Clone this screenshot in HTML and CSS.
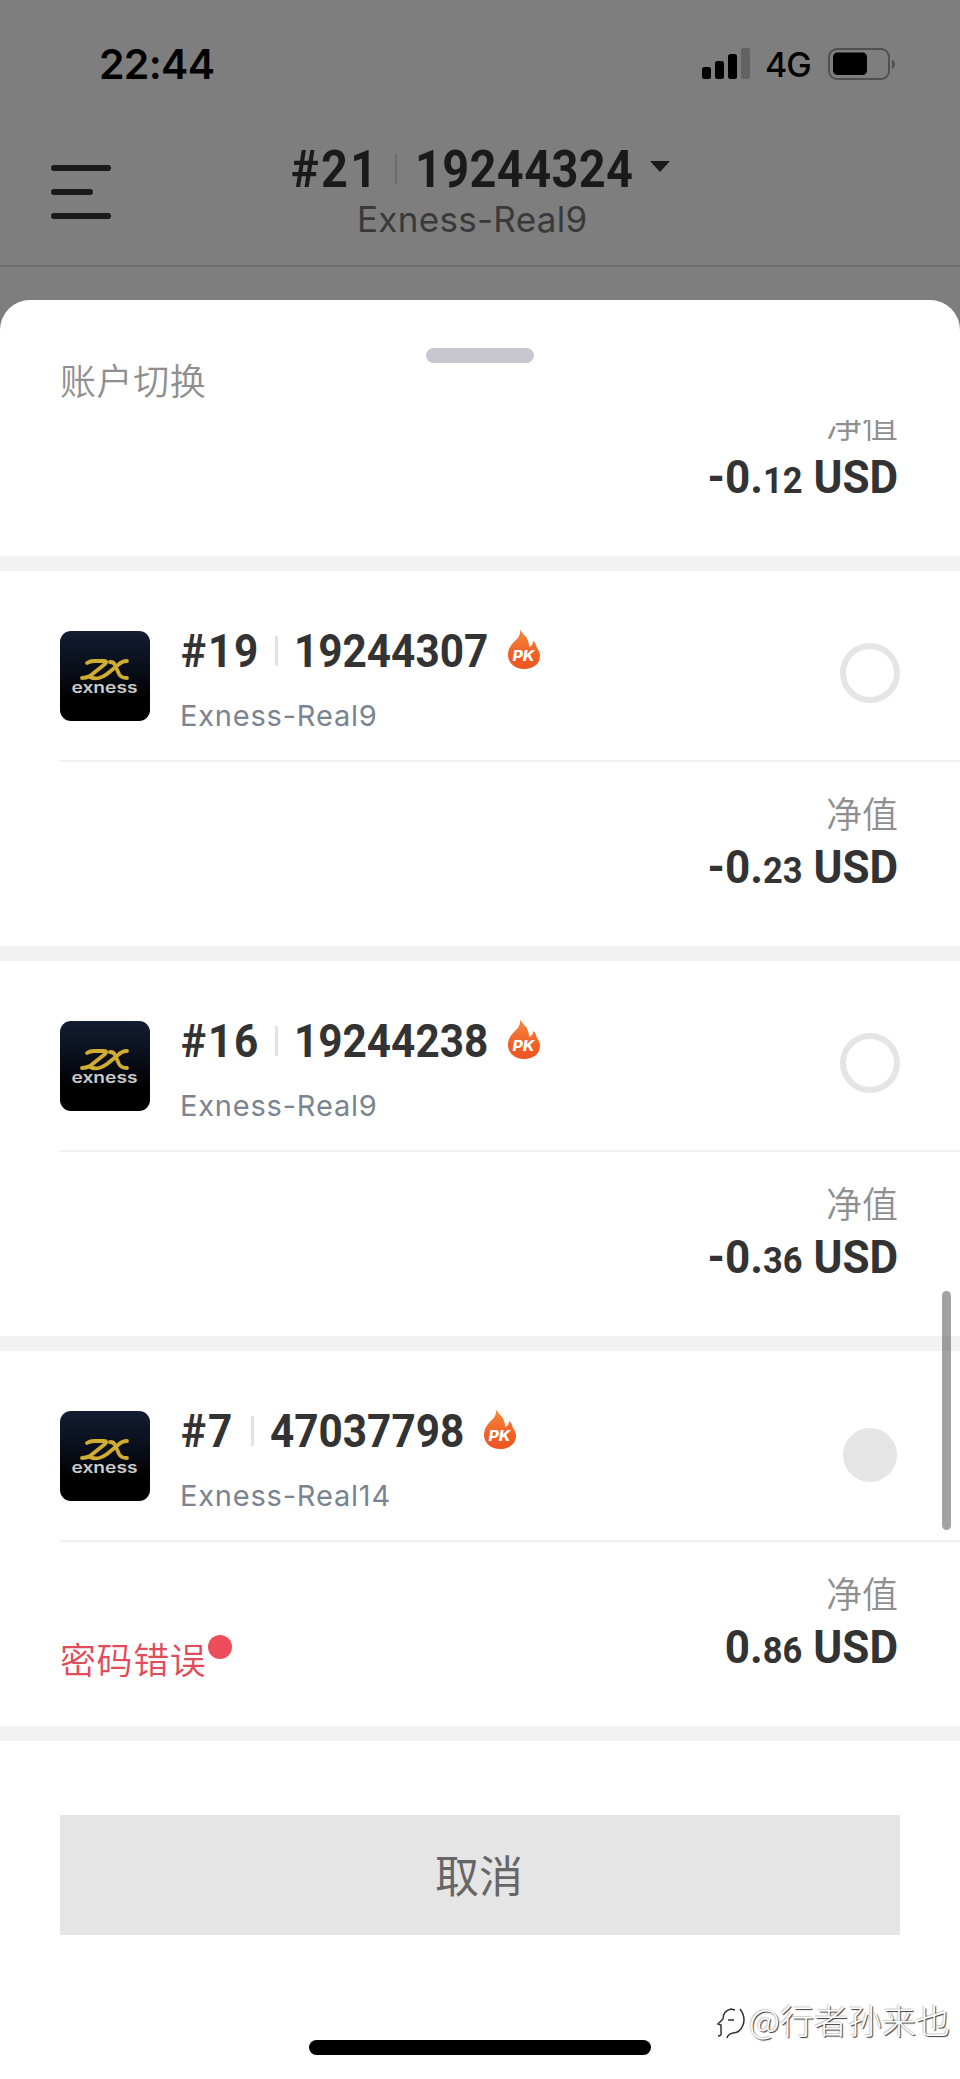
FILE: index.html
```html
<!DOCTYPE html>
<html lang="zh-CN">
<head>
<meta charset="utf-8">
<title>账户切换</title>
<link rel="stylesheet" href="styles.css">
</head>
<body>
<svg class="defs" aria-hidden="true">
  <defs>
    <linearGradient id="night" x1="0" y1="0" x2="0" y2="1"><stop offset="0" stop-color="#131d33"/><stop offset=".5" stop-color="#070b14"/><stop offset=".75" stop-color="#000"/></linearGradient>
    <linearGradient id="fire" x1="0" y1="0" x2="0" y2="1"><stop offset="0" stop-color="#f58a3c"/><stop offset=".6" stop-color="#f0622a"/><stop offset="1" stop-color="#ee5420"/></linearGradient>
    <symbol id="logo" viewBox="0 0 90 90">
      <rect width="90" height="90" rx="11" fill="url(#night)"/>
      <g fill="none" stroke="#d0ad30" stroke-width="3.8" stroke-linecap="round" stroke-linejoin="round">
        <path d="M27 32q3-2 7-2h10q4 0 1 3L30 45q-4 2-8 2M30 46q4 2 9 1 4-1 8-4L58 34q4-4 9-4"/>
        <path d="M50 31q4 0 5 3l4 9q2 4 8 4"/>
      </g>
      <text x="44.500" y="62" text-anchor="middle" textLength="66" lengthAdjust="spacingAndGlyphs" class="logo-word">exness</text>
    </symbol>
    <symbol id="flame" viewBox="0 0 32 40">
      <path d="M12 0c1 4 7 7 8 12 1 2 1 5 1 6 3-1 4-3 4-6 3 2 3 4 4 7 2 3 3 5 3 8 0 8-7 13-16 13S0 34 0 26c0-5 2-9 5-12 4-4 8-7 7-14z" fill="url(#fire)"/>
      <text x="15.500" y="32" text-anchor="middle" textLength="22" lengthAdjust="spacingAndGlyphs" class="pk-word">PK</text>
    </symbol>
  </defs>
</svg>
<div class="phone">
  <div class="status">
    <span class="clock">22:44</span>
    <div class="indicators">
      <svg class="signal" width="48" height="32" viewBox="0 0 48 32"><rect y="19" width="9" height="12" rx="2.5"/><rect x="13" y="13" width="9" height="18" rx="2.5"/><rect x="26" y="6" width="9" height="25" rx="2.5"/><rect x="39" width="9" height="31" rx="2.5" fill="#636363"/></svg>
      <span class="net">4G</span>
      <svg width="68" height="32" viewBox="0 0 68 32"><rect x="1" y="1" width="60" height="30" rx="8" fill="none" stroke="#505050" stroke-width="2"/><rect x="5" y="4.500" width="34" height="22.500" rx="4.500"/><path d="M64 11q3 2 3 5t-3 5z" fill="#505050"/></svg>
    </div>
  </div>
  <header class="top">
    <svg class="menu" width="60" height="54" viewBox="0 0 60 54"><path d="M3 3h54M3 27h36M3 51h54" stroke="#1a1a1a" stroke-width="6" stroke-linecap="round"/></svg>
    <div class="current">
      <div class="current-id"><span class="tag">#21</span><i class="bar"></i><span class="num">19244324</span><svg width="20" height="11" viewBox="0 0 20 11"><path d="M0 0h20L10 11z" fill="#1a1a1a"/></svg></div>
      <div class="current-server">Exness-Real9</div>
    </div>
  </header>
  <section class="sheet">
    <div class="sheet-head"><i class="grabber"></i><h1>账户切换</h1></div>
    <div class="list">
      <div class="equity first"><span></span><div class="worth"><div class="label">净值</div><div class="value">-0.<small>12</small> USD</div></div></div>
      <article class="card">
        <div class="account"><svg class="avatar"><use href="#logo"/></svg>
          <div class="info"><div class="id"><span class="tag">#19</span><i class="bar"></i><span class="num">19244307</span><svg class="pk"><use href="#flame"/></svg></div><div class="server">Exness-Real9</div></div>
          <i class="radio"></i></div>
        <div class="equity"><span></span><div class="worth"><div class="label">净值</div><div class="value">-0.<small>23</small> USD</div></div></div>
      </article>
      <article class="card">
        <div class="account"><svg class="avatar"><use href="#logo"/></svg>
          <div class="info"><div class="id"><span class="tag">#16</span><i class="bar"></i><span class="num">19244238</span><svg class="pk"><use href="#flame"/></svg></div><div class="server">Exness-Real9</div></div>
          <i class="radio"></i></div>
        <div class="equity"><span></span><div class="worth"><div class="label">净值</div><div class="value">-0.<small>36</small> USD</div></div></div>
      </article>
      <article class="card">
        <div class="account"><svg class="avatar"><use href="#logo"/></svg>
          <div class="info"><div class="id"><span class="tag short">#7</span><i class="bar"></i><span class="num">47037798</span><svg class="pk"><use href="#flame"/></svg></div><div class="server">Exness-Real14</div></div>
          <i class="radio off"></i></div>
        <div class="equity"><span class="error">密码错误<i class="dot"></i></span><div class="worth"><div class="label">净值</div><div class="value">0.<small>86</small> USD</div></div></div>
      </article>
      <i class="scrollbar"></i>
    </div>
    <button class="cancel">取消</button>
    <i class="home"></i>
    <div class="watermark"><svg width="30" height="36" viewBox="0 0 30 36"><path d="M2 31q4 0 3-5v-6l-3-1 5-5q0-8 8-10l4 1M12 15h6M24 4q6 8 3 16-3 8-10 8-5 1-6 5" fill="none" stroke="#333" stroke-width="1.500"/></svg><span>@行者孙来也</span></div>
  </section>
</div>
</body>
</html>
```

FILE: styles.css
```css
* { box-sizing: border-box; }
body { margin: 0; background: #7e7e7e; font-family: Inter, "Noto Sans CJK SC", sans-serif; }
i { display: block; }
.defs { position: absolute; width: 0; height: 0; }
.logo-word { font: 600 16px Inter, sans-serif; fill: #cacaca; }
.pk-word { font: italic 800 15px Inter, sans-serif; fill: #fff; }
.phone { width: 960px; height: 2079px; overflow: hidden; display: flex; flex-direction: column; }
.status { height: 128px; padding: 0 64px 0 99px; display: flex; justify-content: space-between; align-items: center; }
.clock { font-size: 41px; font-weight: 600; line-height: 50px; letter-spacing: -.7px; }
.indicators { display: flex; align-items: center; height: 32px; }
.net { font-size: 34px; font-weight: 500; line-height: 32px; width: 45px; margin: 2px 18px 0 15px; letter-spacing: -1px; }
.top { height: 139px; border-bottom: 2px solid #707070; position: relative; padding: 16px 0 0; flex: none; }
.menu { position: absolute; left: 51px; top: 37px; }
.current { display: flex; flex-direction: column; padding-left: 291px; }
.current-id, .id { display: flex; align-items: center; font-family: Roboto, sans-serif; font-weight: 700; white-space: nowrap; }
.tag, .num { transform: scaleX(.92); transform-origin: left; }
.tag { letter-spacing: 2px; }
.current-id { height: 50px; color: #1a1a1a; font-size: 51px; }
.current-id .tag { width: 104px; letter-spacing: 2.5px; }
.current-id .bar { width: 2px; height: 30px; background: #6c6c6c; margin-right: 18px; }
.current-id .num { width: 235px; letter-spacing: .4px; }
.current-id svg { margin-top: -5px; }
.current-server { font-size: 35px; font-weight: 400; line-height: 44px; color: #393939; padding-left: 66px; margin-top: 3px; letter-spacing: .3px; }
.sheet { margin-top: 33px; height: 1779px; flex: none; background: #fff; border-radius: 30px 30px 0 0; display: flex; flex-direction: column; position: relative; }
.sheet-head { height: 120px; flex: none; display: flex; flex-direction: column; }
.grabber { width: 108px; height: 15px; border-radius: 8px; background: #c8c7ce; margin: 48px auto 0; }
h1 { margin: -7px 0 0 60px; font-size: 36px; font-weight: 350; line-height: 52px; color: #8f8f8f; letter-spacing: .6px; }
.list { height: 1321px; flex: none; overflow: hidden; position: relative; }
.equity { display: flex; justify-content: space-between; height: 199px; padding: 27px 62px 0 60px; border-bottom: 15px solid #f2f2f2; }
.first { margin-top: -48px; }
.worth { text-align: right; }
.label { font-size: 36px; font-weight: 350; line-height: 52px; color: #8f8f8f; }
.value { font-family: Roboto, sans-serif; font-weight: 700; font-size: 46px; line-height: 52px; color: #333; white-space: pre; transform: scaleX(.957); transform-origin: right; }
.value small { font-size: 36px; }
.account { height: 191px; margin-left: 60px; padding: 60px 60px 0 0; display: flex; border-bottom: 2px solid #f0f0f0; }
.avatar { width: 90px; height: 90px; flex: none; }
.info { margin-left: 31px; flex: 1; }
.id { height: 40px; font-size: 46px; color: #333; }
.id .tag { width: 94px; }
.id .short { width: 70px; }
.id .bar { width: 3px; height: 30px; background: #e3e3e3; margin-right: 16px; }
.id .num { width: 214px; }
.pk { width: 32px; height: 40px; flex: none; margin-top: -5px; }
.server { font-size: 29px; line-height: 36px; margin: 27px 0 0 -1px; font-weight: 400; color: #7a8490; letter-spacing: .8px; }
.radio { width: 60px; height: 60px; border: 6px solid #e5e5e5; border-radius: 50%; margin-top: 12px; }
.off { width: 54px; height: 54px; background: #e5e5e5; margin: 17px 3px 0 0; }
.error { font-size: 36px; font-weight: 350; line-height: 52px; color: #e04c5a; display: flex; margin-top: 66px; letter-spacing: .6px; }
.dot { width: 24px; height: 24px; border-radius: 50%; background: #ee4e5c; margin-left: 2px; }
.scrollbar { position: absolute; left: 942px; top: 871px; width: 9px; height: 239px; border-radius: 5px; background: rgba(0,0,0,.36); }
.cancel { width: 840px; height: 120px; margin: 74px auto 0; padding: 0 2px 3px 0; border: 0; background: #e5e5e5; color: #666; font: 400 44px "Noto Sans CJK SC", sans-serif; flex: none; }
.home { width: 342px; height: 15px; border-radius: 8px; background: #000; margin: 105px auto 0; flex: none; }
.watermark { position: absolute; right: 10px; bottom: 35px; display: flex; align-items: center; gap: 3px; font: 300 34px/48px "Noto Sans CJK SC", sans-serif; color: #fff; text-shadow: 1px 1px 1px #333, -1px -1px 1px #ccc; }
.watermark svg { margin-top: 6px; }
```
